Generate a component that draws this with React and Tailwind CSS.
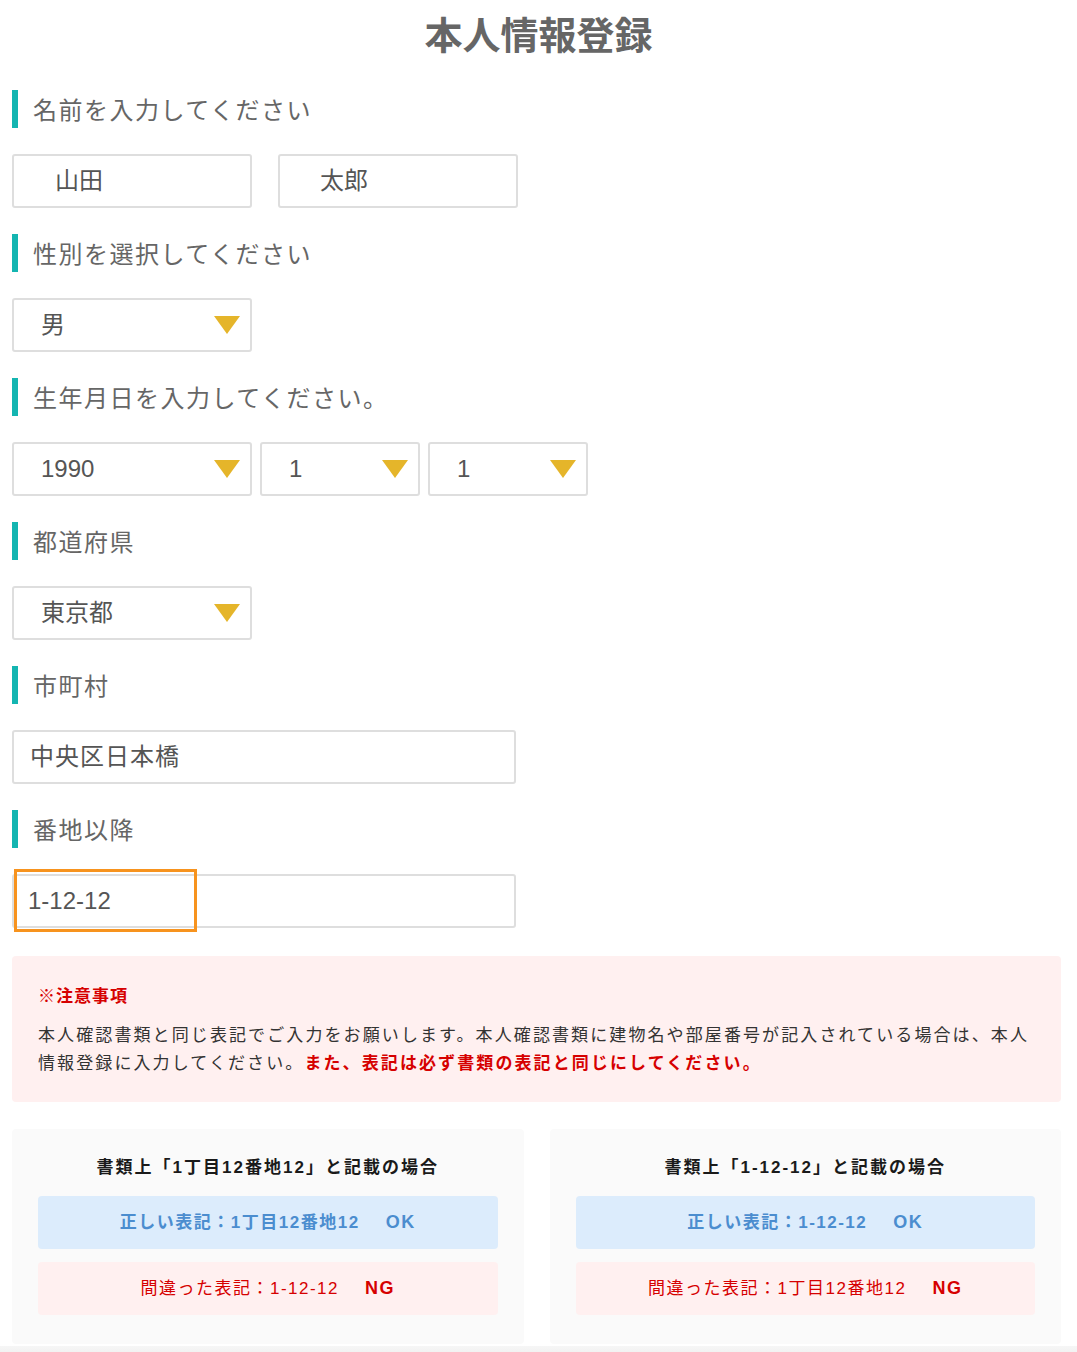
import React from 'react';

const FONT = { fontFamily: '"Liberation Sans", "Noto Sans CJK JP", sans-serif' };

function Label({ children }) {
  return (
    <div className="flex items-center h-[38px]">
      <div className="w-[6px] h-[38px] bg-[#14b5b1]" />
      <span className="ml-[15px] pt-[4px] text-[24px] tracking-[1.5px] text-[#666]">{children}</span>
    </div>
  );
}

function Field({ width, pl, children }) {
  return (
    <div
      className={`${width} h-[54px] border-2 border-[#dedede] rounded-[3px] bg-white flex items-center text-[24px] text-[#555] ${pl}`}
    >
      {children}
    </div>
  );
}

function Triangle() {
  return (
    <svg width="26" height="18" viewBox="0 0 26 18" className="shrink-0">
      <polygon points="0,0 26,0 13,18" fill="#e5b52a" />
    </svg>
  );
}

function Select({ width, children }) {
  return (
    <div
      className={`${width} h-[54px] border-2 border-[#dedede] rounded-[3px] bg-white flex items-center justify-between pl-[27px] pr-[10px] text-[24px] text-[#555]`}
    >
      <span>{children}</span>
      <Triangle />
    </div>
  );
}

function Section({ label, children }) {
  return (
    <div className="mt-[26px] first:mt-0">
      <Label>{label}</Label>
      <div className="mt-[26px] flex">{children}</div>
    </div>
  );
}

function ExampleCard({ title, ok, ng }) {
  return (
    <div className="flex-1 bg-[#fafafa] rounded-[4px] pt-[27px] pb-[29px] px-[26px]">
      <div className="text-center text-[17px] font-bold tracking-[2px] text-[#1a1a1a] leading-[24px]">{title}</div>
      <div className="mt-[16px] h-[53px] rounded-[4px] bg-[#dcecfc] flex items-center justify-center text-[17px] font-bold tracking-[1.5px] text-[#4b8dcf]">
        正しい表記：{ok}
        <span className="ml-[26px] text-[18px]">OK</span>
      </div>
      <div className="mt-[13px] h-[53px] rounded-[4px] bg-[#fff0f0] flex items-center justify-center text-[17px] tracking-[1.5px] text-[#d60000]">
        間違った表記：{ng}
        <span className="ml-[26px] text-[18px] font-bold">NG</span>
      </div>
    </div>
  );
}

export default function App() {
  return (
    <div className="w-[1077px] min-h-[1352px] bg-white" style={FONT}>
      <h1 className="pt-[14px] text-center text-[38px] leading-[44px] font-bold text-[#666]">本人情報登録</h1>

      <div className="px-[12px] mt-[32px]">
        <Section label="名前を入力してください">
          <div className="flex gap-[26px]">
            <Field width="w-[240px]" pl="pl-[41px]">山田</Field>
            <Field width="w-[240px]" pl="pl-[40px]">太郎</Field>
          </div>
        </Section>

        <Section label="性別を選択してください">
          <Select width="w-[240px]">男</Select>
        </Section>

        <Section label="生年月日を入力してください。">
          <div className="flex gap-[8px]">
            <Select width="w-[240px]">1990</Select>
            <Select width="w-[160px]">1</Select>
            <Select width="w-[160px]">1</Select>
          </div>
        </Section>

        <Section label="都道府県">
          <Select width="w-[240px]">東京都</Select>
        </Section>

        <Section label="市町村">
          <Field width="w-[504px]" pl="pl-[16px] tracking-[1px]">中央区日本橋</Field>
        </Section>

        <Section label="番地以降">
          <div className="relative">
            <Field width="w-[504px]" pl="pl-[14px]">1-12-12</Field>
            <div className="absolute left-[2px] top-[-5px] w-[183px] h-[63px] border-[3px] border-[#f7931e]" />
          </div>
        </Section>

        <div className="mt-[28px] w-[1049px] bg-[#fff0f0] rounded-[4px] px-[26px] pt-[27px] pb-[24px]">
          <div className="text-[17px] font-bold tracking-[1px] text-[#d60000] leading-[28px]">※注意事項</div>
          <p className="mt-[11px] text-[17px] leading-[28px] tracking-[2.1px] text-[#333] whitespace-nowrap">
            本人確認書類と同じ表記でご入力をお願いします。本人確認書類に建物名や部屋番号が記入されている場合は、本人
            <br />
            情報登録に入力してください。
            <span className="font-bold text-[#d60000]">また、表記は必ず書類の表記と同じにしてください。</span>
          </p>
        </div>

        <div className="mt-[27px] w-[1049px] flex gap-[26px]">
          <ExampleCard title="書類上「1丁目12番地12」と記載の場合" ok="1丁目12番地12" ng="1-12-12" />
          <ExampleCard title="書類上「1-12-12」と記載の場合" ok="1-12-12" ng="1丁目12番地12" />
        </div>
      </div>
      <div className="mt-[2px] h-[10px] bg-gradient-to-b from-[#f6f6f6] to-[#efefef]" />
    </div>
  );
}
